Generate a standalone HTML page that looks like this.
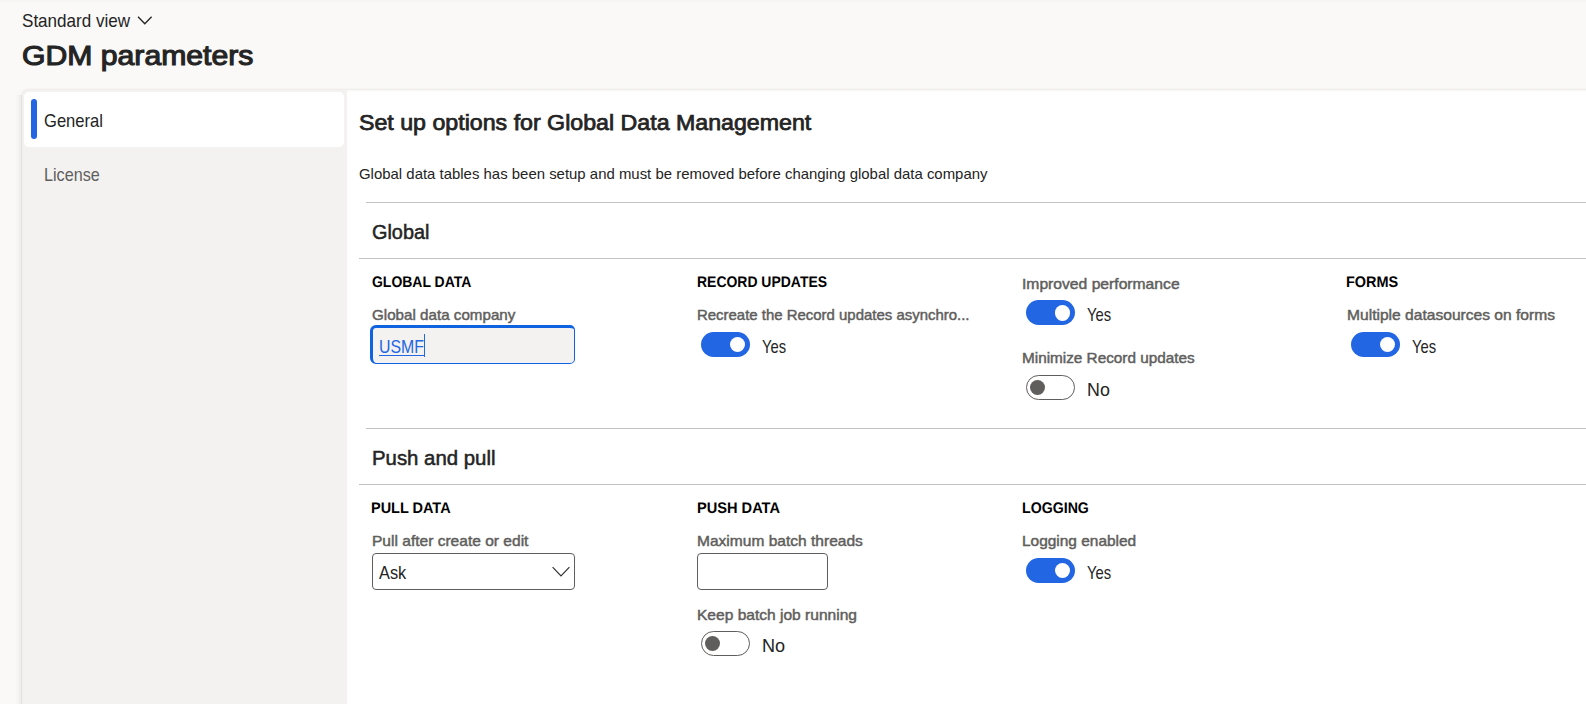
<!DOCTYPE html>
<html lang="en">
<head>
<meta charset="utf-8">
<title>GDM parameters</title>
<style>
*{box-sizing:border-box;margin:0;padding:0}
html,body{width:1586px;height:704px;overflow:hidden}
body{background:#faf9f8;font-family:"Liberation Sans",sans-serif;color:#242424;position:relative}
.t{position:absolute;white-space:nowrap;line-height:1;transform-origin:0 0}
.topshade{position:absolute;left:0;top:0;width:1586px;height:3px;background:linear-gradient(#f5f4f3,#faf9f8)}
.side{position:absolute;left:21.5px;top:89.5px;width:1575px;height:620px;background:#f3f2f1;border-top-left-radius:6px;box-shadow:0 0 3px rgba(0,0,0,.13)}
.tab{position:absolute;left:24px;top:92px;width:320px;height:55px;background:#fff;border-radius:5px}
.bar{position:absolute;left:31px;top:98.5px;width:6px;height:40.5px;border-radius:3px;background:#2266e3}
.main{position:absolute;left:347px;top:90px;width:1245px;height:620px;background:linear-gradient(#f9f8f7 0,#fcfcfb 1.5px,#fff 2.5px,#fff 100%)}
.hr{position:absolute;height:1px;background:#c4c2c0;right:0}
.tg{position:absolute;width:49px;height:25px;border-radius:12.5px}
.tg.on{background:#2266e3}
.tg.on i{position:absolute;left:28.6px;top:4.6px;width:15.8px;height:15.8px;border-radius:50%;background:#fff}
.tg.off{background:#fff;border:1px solid #605e5c}
.tg.off i{position:absolute;left:3.2px;top:4px;width:15px;height:15px;border-radius:50%;background:#605e5c}
.inp{position:absolute;border:1px solid #605e5c;border-radius:4px;background:#fff}
</style>
</head>
<body>
<div class="topshade"></div>
<svg style="position:absolute;left:136px;top:14px" width="18" height="13" viewBox="0 0 18 13"><path d="M2 2.8 L8.8 9.8 L15.6 2.8" fill="none" stroke="#242424" stroke-width="1.3"/></svg>

<div class="side"></div>
<div style="position:absolute;left:15px;top:95px;width:8px;height:609px;background:linear-gradient(90deg,#f9f8f7 0,#f9f8f7 12.5%,#f8f7f6 12.5%,#f8f7f6 25%,#f6f5f4 25%,#f6f5f4 37.5%,#f4f3f2 37.5%,#f4f3f2 50%,#f1f0ee 50%,#f1f0ee 62.5%,#edecea 62.5%,#edecea 75%,#e4e3e1 75%,#e4e3e1 87.5%,#f0efed 87.5%,#f0efed 100%)"></div>
<div class="tab"></div>
<div class="bar"></div>
<div class="main"></div>

<div class="hr" style="left:366px;top:202px"></div>
<div class="hr" style="left:359px;top:258px"></div>
<div class="hr" style="left:366px;top:428px"></div>
<div class="hr" style="left:359px;top:484px"></div>

<div class="inp" style="left:370px;top:325px;width:205px;height:39px;background:#f3f2f1;border:solid #0f62e0;border-width:3px 1px 1px 3px;border-radius:6px 5px 5px 6px"></div>
<div style="position:absolute;left:379px;top:355px;width:46px;height:1px;background:#2266e3"></div>
<div style="position:absolute;left:424px;top:334px;width:1px;height:23px;background:#2266e3"></div>
<div class="inp" style="left:372px;top:553px;width:203px;height:37px"></div>
<svg style="position:absolute;left:551px;top:565px" width="20" height="14" viewBox="0 0 20 14"><path d="M1.6 2.2 L10 11 L18.4 2.2" fill="none" stroke="#323130" stroke-width="1.2"/></svg>
<div class="inp" style="left:697px;top:553px;width:131px;height:37px"></div>

<div class="tg on" style="left:701px;top:332px"><i></i></div>
<div class="tg on" style="left:1026px;top:300.3px"><i></i></div>
<div class="tg off" style="left:1026px;top:375px"><i></i></div>
<div class="tg on" style="left:1351px;top:332px"><i></i></div>
<div class="tg off" style="left:701px;top:631px"><i></i></div>
<div class="tg on" style="left:1026px;top:558px"><i></i></div>

<span class="t" id="sv" style="left:22.30px;top:12.93px;font-size:17.8px;color:#242424;transform:scaleX(0.9598);">Standard view</span>
<span class="t" id="title" style="left:21.85px;top:41.51px;font-size:27.4px;color:#242424;transform:scaleX(1.1015);-webkit-text-stroke:1.1px #242424;">GDM parameters</span>
<span class="t" id="gen" style="left:44.40px;top:113.43px;font-size:17.8px;color:#242424;transform:scaleX(0.9325);">General</span>
<span class="t" id="lic" style="left:43.69px;top:166.53px;font-size:17.8px;color:#605e5c;transform:scaleX(0.9106);">License</span>
<span class="t" id="h1" style="left:359.07px;top:112.42px;font-size:21.6px;color:#242424;transform:scaleX(1.0734);-webkit-text-stroke:0.75px #242424;">Set up options for Global Data Management</span>
<span class="t" id="info" style="left:359.30px;top:167.00px;font-size:14.3px;color:#242424;transform:scaleX(1.0446);">Global data tables has been setup and must be removed before changing global data company</span>
<span class="t" id="s1" style="left:372.35px;top:222.71px;font-size:19.6px;color:#242424;transform:scaleX(1.0127);-webkit-text-stroke:0.5px #242424;">Global</span>
<span class="t" id="g1" style="left:372.10px;top:273.66px;font-size:15.4px;font-weight:bold;color:#000;transform:scaleX(0.9079) rotate(0.03deg);">GLOBAL DATA</span>
<span class="t" id="l1" style="left:372.32px;top:307.60px;font-size:14.3px;color:#605e5c;transform:scaleX(1.0610);-webkit-text-stroke:0.45px #605e5c;">Global data company</span>
<span class="t" id="v1" style="left:378.91px;top:338.93px;font-size:17.8px;color:#2266e3;transform:scaleX(0.8927);">USMF</span>
<span class="t" id="g2" style="left:696.89px;top:273.66px;font-size:15.4px;font-weight:bold;color:#000;transform:scaleX(0.9071) rotate(0.03deg);">RECORD UPDATES</span>
<span class="t" id="l2" style="left:696.78px;top:307.60px;font-size:14.3px;color:#605e5c;transform:scaleX(1.0454);-webkit-text-stroke:0.45px #605e5c;">Recreate the Record updates asynchro...</span>
<span class="t" id="y1" style="left:762.20px;top:339.13px;font-size:17.8px;color:#242424;transform:scaleX(0.8312);">Yes</span>
<span class="t" id="l3" style="left:1021.73px;top:276.90px;font-size:14.3px;color:#605e5c;transform:scaleX(1.0957);-webkit-text-stroke:0.45px #605e5c;">Improved performance</span>
<span class="t" id="y2" style="left:1087.20px;top:306.93px;font-size:17.8px;color:#242424;transform:scaleX(0.8312);">Yes</span>
<span class="t" id="l4" style="left:1021.76px;top:350.50px;font-size:14.3px;color:#605e5c;transform:scaleX(1.0699);-webkit-text-stroke:0.45px #605e5c;">Minimize Record updates</span>
<span class="t" id="n1" style="left:1087.00px;top:382.43px;font-size:17.8px;color:#242424;transform:scaleX(1.0027);">No</span>
<span class="t" id="g3" style="left:1346.46px;top:273.66px;font-size:15.4px;font-weight:bold;color:#000;transform:scaleX(0.9391) rotate(0.03deg);">FORMS</span>
<span class="t" id="l5" style="left:1346.73px;top:307.60px;font-size:14.3px;color:#605e5c;transform:scaleX(1.0907);-webkit-text-stroke:0.45px #605e5c;">Multiple datasources on forms</span>
<span class="t" id="y3" style="left:1412.20px;top:339.13px;font-size:17.8px;color:#242424;transform:scaleX(0.8312);">Yes</span>
<span class="t" id="s2" style="left:371.81px;top:448.71px;font-size:19.6px;color:#242424;transform:scaleX(1.0402);-webkit-text-stroke:0.5px #242424;">Push and pull</span>
<span class="t" id="g4" style="left:371.46px;top:499.66px;font-size:15.4px;font-weight:bold;color:#000;transform:scaleX(0.9403) rotate(0.03deg);">PULL DATA</span>
<span class="t" id="l6" style="left:371.74px;top:533.70px;font-size:14.3px;color:#605e5c;transform:scaleX(1.0874);-webkit-text-stroke:0.45px #605e5c;">Pull after create or edit</span>
<span class="t" id="v2" style="left:379.20px;top:565.23px;font-size:17.8px;color:#242424;transform:scaleX(0.9176);">Ask</span>
<span class="t" id="g5" style="left:696.55px;top:499.66px;font-size:15.4px;font-weight:bold;color:#000;transform:scaleX(0.9481) rotate(0.03deg);">PUSH DATA</span>
<span class="t" id="l7" style="left:696.84px;top:533.70px;font-size:14.3px;color:#605e5c;transform:scaleX(1.0874);-webkit-text-stroke:0.45px #605e5c;">Maximum batch threads</span>
<span class="t" id="l8" style="left:696.84px;top:607.60px;font-size:14.3px;color:#605e5c;transform:scaleX(1.0879);-webkit-text-stroke:0.45px #605e5c;">Keep batch job running</span>
<span class="t" id="n2" style="left:761.78px;top:637.53px;font-size:17.8px;color:#242424;transform:scaleX(1.0164);">No</span>
<span class="t" id="g6" style="left:1021.88px;top:499.66px;font-size:15.4px;font-weight:bold;color:#000;transform:scaleX(0.9204) rotate(0.03deg);">LOGGING</span>
<span class="t" id="l9" style="left:1021.95px;top:533.60px;font-size:14.3px;color:#605e5c;transform:scaleX(1.0798);-webkit-text-stroke:0.45px #605e5c;">Logging enabled</span>
<span class="t" id="y4" style="left:1087.20px;top:565.13px;font-size:17.8px;color:#242424;transform:scaleX(0.8312);">Yes</span>
</body>
</html>
